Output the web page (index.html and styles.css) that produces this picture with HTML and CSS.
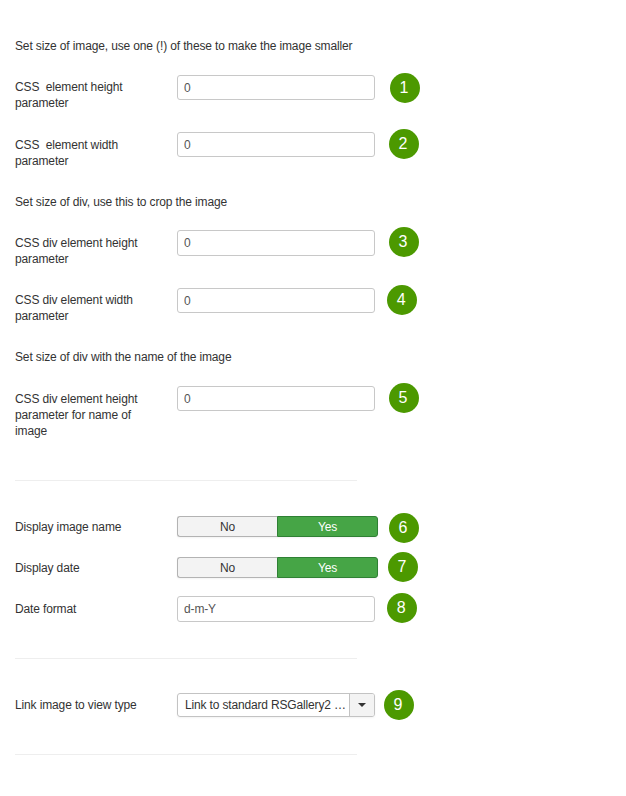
FILE: index.html
```html
<!DOCTYPE html>
<html lang="en">
<head>
<meta charset="utf-8">
<title>Gallery parameters</title>
<link rel="stylesheet" href="styles.css">
</head>
<body>
<main class="form">
  <p class="note n1">Set size of image, use one (!) of these to make the image smaller</p>
  <div class="row r1"><label>CSS &nbsp;element height parameter</label><div class="control"><input value="0"></div><span class="badge b1">1</span></div>
  <div class="row r2"><label>CSS &nbsp;element width parameter</label><div class="control"><input value="0"></div><span class="badge b2">2</span></div>
  <p class="note n2">Set size of div, use this to crop the image</p>
  <div class="row r3"><label>CSS div element height parameter</label><div class="control"><input value="0"></div><span class="badge b3">3</span></div>
  <div class="row r4"><label>CSS div element width parameter</label><div class="control"><input value="0"></div><span class="badge b4">4</span></div>
  <p class="note n3">Set size of div with the name of the image</p>
  <div class="row r5"><label>CSS div element height parameter for name of image</label><div class="control"><input value="0"></div><span class="badge b5">5</span></div>
  <hr>
  <div class="row r6"><label>Display image name</label><div class="switch"><span>No</span><span class="on">Yes</span></div><span class="badge b6">6</span></div>
  <div class="row r7"><label>Display date</label><div class="switch"><span>No</span><span class="on">Yes</span></div><span class="badge b7">7</span></div>
  <div class="row r8"><label>Date format</label><div class="control"><input value="d-m-Y"></div><span class="badge b8">8</span></div>
  <hr class="before-link">
  <div class="row r9"><label>Link image to view type</label><div class="select"><span class="value">Link to standard RSGallery2 …</span><span class="arrow"><i></i></span></div><span class="badge b9">9</span></div>
  <hr>
</main>
</body>
</html>
```
FILE: styles.css
```css
* { box-sizing: border-box; }
body { margin: 0; background: #fff; color: #333; font: 12px/16px "Liberation Sans", Arial, sans-serif; letter-spacing: -.135px; }
.form { padding: 38px 0 0 15px; }
.note { margin: 0; height: 37px; }
.n2 { height: 36px; }
.row { position: relative; display: grid; grid-template-columns: 162px 201px; align-items: start; height: 57px; }
label { width: 130px; padding-top: 4px; }
.r2 label, .r3 label, .r5 label, .r8 label { padding-top: 5px; }
.control { width: 198px; }
input { display: block; width: 198px; height: 25px; padding: 0 6px; border: 1px solid #c8c8c8; border-radius: 3px; background: #fff; color: #555; font: inherit; letter-spacing: inherit; }
.r3 input, .r8 input { height: 26px; }
.r2 { height: 62px; }
.r3 { height: 58px; }
.r4 { height: 61px; }
.r5 { height: 94px; }
.r6 { height: 41px; }
.r7 { height: 39px; }
.r6 label, .r7 label { padding-top: 3px; }
.r8 { height: 62px; }
.r9 { height: 61px; }
hr { width: 342px; height: 1px; margin: 0 0 35px; border: 0; background: #eee; }
.before-link { margin-bottom: 34px; }
.switch { display: flex; width: 201px; height: 21px; border-radius: 3px; line-height: 20px; text-align: center; box-shadow: 0 1px 2px rgba(0,0,0,.05); }
.switch span { flex: 1; border: 1px solid #b3b3b3; border-right: 0; border-radius: 3px 0 0 3px; background: #f3f3f3; }
.switch .on { border: 1px solid #2f8034; border-radius: 0 3px 3px 0; background: #46a546; color: #fff; }
.select { display: flex; width: 198px; height: 24px; border: 1px solid #c3c3c3; border-radius: 3px; line-height: 22px; box-shadow: 0 1px 2px rgba(0,0,0,.05); }
.value { flex: 1; padding-left: 7px; white-space: nowrap; letter-spacing: -.16px; }
.arrow { display: flex; width: 25px; flex: none; justify-content: center; border-left: 1px solid #c3c3c3; border-radius: 0 2px 2px 0; background: #f3f3f3; }
.arrow i { width: 0; height: 0; margin-top: 9px; border: 4px solid transparent; border-top-color: #333; border-bottom: 0; }
.badge { position: absolute; left: 373.5px; top: -3.5px; width: 30px; height: 30px; border-radius: 50%; background: #4c9900; color: #fff; font: 16px/29px "Liberation Sans", Arial, sans-serif; letter-spacing: 0; text-indent: -1px; text-align: center; }
.b1 { left: 374.5px; top: -2.5px; }
.b4 { left: 371.7px; }
.b7 { left: 372.5px; top: -5.5px; }
.b8 { left: 371.7px; }
.b9 { left: 368.5px; }
```
